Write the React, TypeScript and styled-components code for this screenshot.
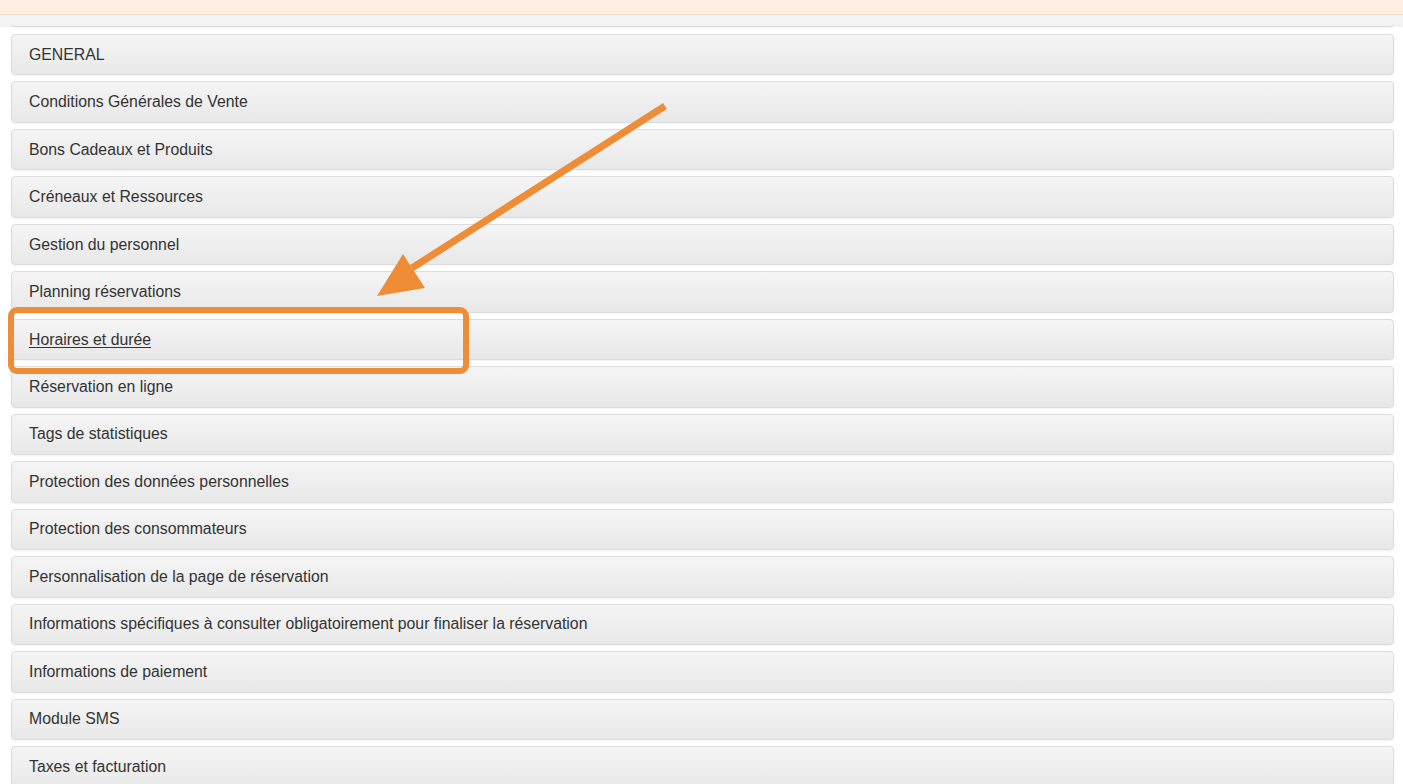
import styled, { createGlobalStyle } from "styled-components";

const GlobalStyle = createGlobalStyle`
  html, body {
    margin: 0;
    padding: 0;
    background: #fff;
    font-family: "Liberation Sans", Arial, sans-serif;
  }
`;

const Page = styled.div`
  position: relative;
  width: 1403px;
  height: 784px;
  overflow: hidden;
  background: #fff;
`;

const Notice = styled.div`
  height: 14px;
  background: #fdf0e2;
  border-bottom: 1px solid #f3dcc6;
`;

const PrevStrip = styled.div`
  height: 12px;
  background: #f3f3f3;
  padding: 0 9px 0 11px;
`;

const PrevTail = styled.div`
  height: 11px;
  border-bottom: 1px solid #dadada;
  border-radius: 0 0 4px 4px;
  box-shadow: 0 1px 1px rgba(0, 0, 0, 0.05);
`;

const List = styled.div`
  display: flex;
  flex-direction: column;
  gap: 6px;
  padding: 7px 9px 0 11px;
`;

const Panel = styled.div`
  box-sizing: border-box;
  height: 41.47px;
  display: flex;
  align-items: center;
  padding: 0 17px;
  border: 1px solid #dcdcdc;
  border-radius: 4px;
  background: linear-gradient(to bottom, #f5f5f5 0%, #e8e8e8 100%);
  box-shadow: 0 1px 2px rgba(0, 0, 0, 0.05);
`;

const Label = styled.span<{ $link?: boolean }>`
  font-size: 15.8px;
  color: #333;
  text-decoration: ${(p) => (p.$link ? "underline" : "none")};
  text-underline-offset: 2px;
`;

const Highlight = styled.div`
  position: absolute;
  left: 8px;
  top: 307px;
  width: 461px;
  height: 67px;
  box-sizing: border-box;
  border: 6px solid #ef8c36;
  border-radius: 9px;
  pointer-events: none;
`;

const ArrowLayer = styled.svg`
  position: absolute;
  left: 0;
  top: 0;
  pointer-events: none;
`;

const items = [
  "GENERAL",
  "Conditions Générales de Vente",
  "Bons Cadeaux et Produits",
  "Créneaux et Ressources",
  "Gestion du personnel",
  "Planning réservations",
  "Horaires et durée",
  "Réservation en ligne",
  "Tags de statistiques",
  "Protection des données personnelles",
  "Protection des consommateurs",
  "Personnalisation de la page de réservation",
  "Informations spécifiques à consulter obligatoirement pour finaliser la réservation",
  "Informations de paiement",
  "Module SMS",
  "Taxes et facturation",
];

export default function App() {
  return (
    <Page>
      <GlobalStyle />
      <Notice />
      <PrevStrip>
        <PrevTail />
      </PrevStrip>
      <List>
        {items.map((t) => (
          <Panel key={t}>
            <Label $link={t === "Horaires et durée"}>{t}</Label>
          </Panel>
        ))}
      </List>
      <Highlight />
      <ArrowLayer width="1403" height="784" viewBox="0 0 1403 784">
        <line x1="665" y1="106" x2="412" y2="268" stroke="#ef8c36" strokeWidth="7" strokeLinecap="butt" />
        <polygon points="377,296 403,254 425,288" fill="#ef8c36" />
      </ArrowLayer>
    </Page>
  );
}
